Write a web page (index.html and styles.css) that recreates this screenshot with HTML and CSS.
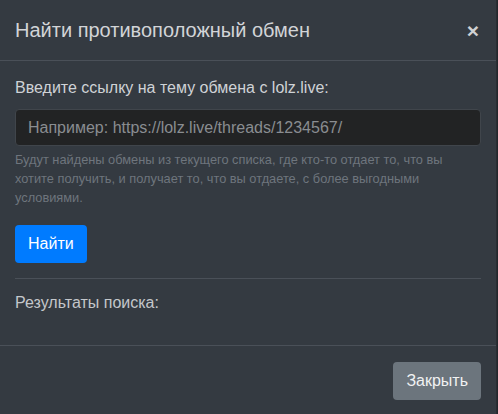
FILE: index.html
```html
<!DOCTYPE html>
<html lang="ru">
<head>
  <meta charset="UTF-8">
  <meta name="viewport" content="width=device-width, initial-scale=1.0">
  <title>Найти противоположный обмен</title>
  <link rel="stylesheet" href="styles.css">
</head>
<body>
  <div class="modal">
    <div class="modal-header">
      <h5 class="modal-title">Найти противоположный обмен</h5>
      <button type="button" class="close">&times;</button>
    </div>

    <div class="modal-body">
      <div class="form-group">
        <label for="thread-url">Введите ссылку на тему обмена с lolz.live:</label>
        <input type="text" id="thread-url" class="form-control" placeholder="Например: https://lolz.live/threads/1234567/">
        <small class="form-text">Будут найдены обмены из текущего списка, где кто-то отдает то, что вы хотите получить, и получает то, что вы отдаете, с более выгодными условиями.</small>
      </div>

      <button type="button" class="btn btn-primary">Найти</button>

      <hr>

      <div class="results-title">Результаты поиска:</div>
      <div class="results"></div>
    </div>

    <div class="modal-footer">
      <button type="button" class="btn btn-secondary">Закрыть</button>
    </div>
  </div>
</body>
</html>
```

FILE: styles.css
```css
body {
  margin: 0;
  background-color: #23272c;
  font-family: "Liberation Sans", Arial, sans-serif;
  font-size: 16px;
  line-height: 1.5;
  color: #cfd2d6;
}

.modal {
  width: 496px;
  height: 414px;
  background-color: #343a41;
  border-right: 1px solid #2a2e33;
  overflow: hidden;
}

.modal-header {
  display: flex;
  align-items: center;
  justify-content: space-between;
  padding: 15px 15px 15px 15px;
  border-bottom: 1px solid #4a5058;
}

.modal-title {
  margin: 0;
  font-size: 20px;
  font-weight: normal;
  line-height: 30px;
  color: #d2d4d7;
}

.close {
  background: none;
  border: none;
  padding: 0 2px 0 0;
  font-family: "Liberation Sans", Arial, sans-serif;
  font-size: 21px;
  font-weight: bold;
  line-height: 1;
  color: #cfd1d4;
  cursor: pointer;
}

.modal-body {
  padding: 15px 15px 30px;
}

label {
  display: block;
  margin-bottom: 9px;
  color: #cfd2d6;
}

.form-control {
  display: block;
  width: 100%;
  height: 37px;
  padding: 6px 12px;
  box-sizing: border-box;
  background-color: #222324;
  border: 1px solid #40454b;
  border-radius: 4px;
  font-family: inherit;
  font-size: 16px;
  color: #ddd;
}

.form-control::placeholder {
  color: #8a8d91;
}

.form-text {
  display: block;
  margin-top: 4px;
  font-size: 12.8px;
  line-height: 19.2px;
  color: #6e757d;
}

.form-group {
  margin-bottom: 17px;
}

.btn {
  padding: 6px 13px;
  border: none;
  border-radius: 4px;
  font-family: inherit;
  font-size: 16px;
  line-height: 26px;
  color: #fff;
  cursor: pointer;
}

.btn-primary {
  background-color: #007bff;
}

.btn-secondary {
  background-color: #6c757d;
  color: #f1f2f3;
}

hr {
  margin: 15px 0 12px;
  border: none;
  border-top: 1px solid #4a5058;
}

.results-title {
  color: #c4c7cb;
}

.modal-footer {
  display: flex;
  justify-content: flex-end;
  padding: 16px 15px;
  border-top: 1px solid #4a5058;
}
```
